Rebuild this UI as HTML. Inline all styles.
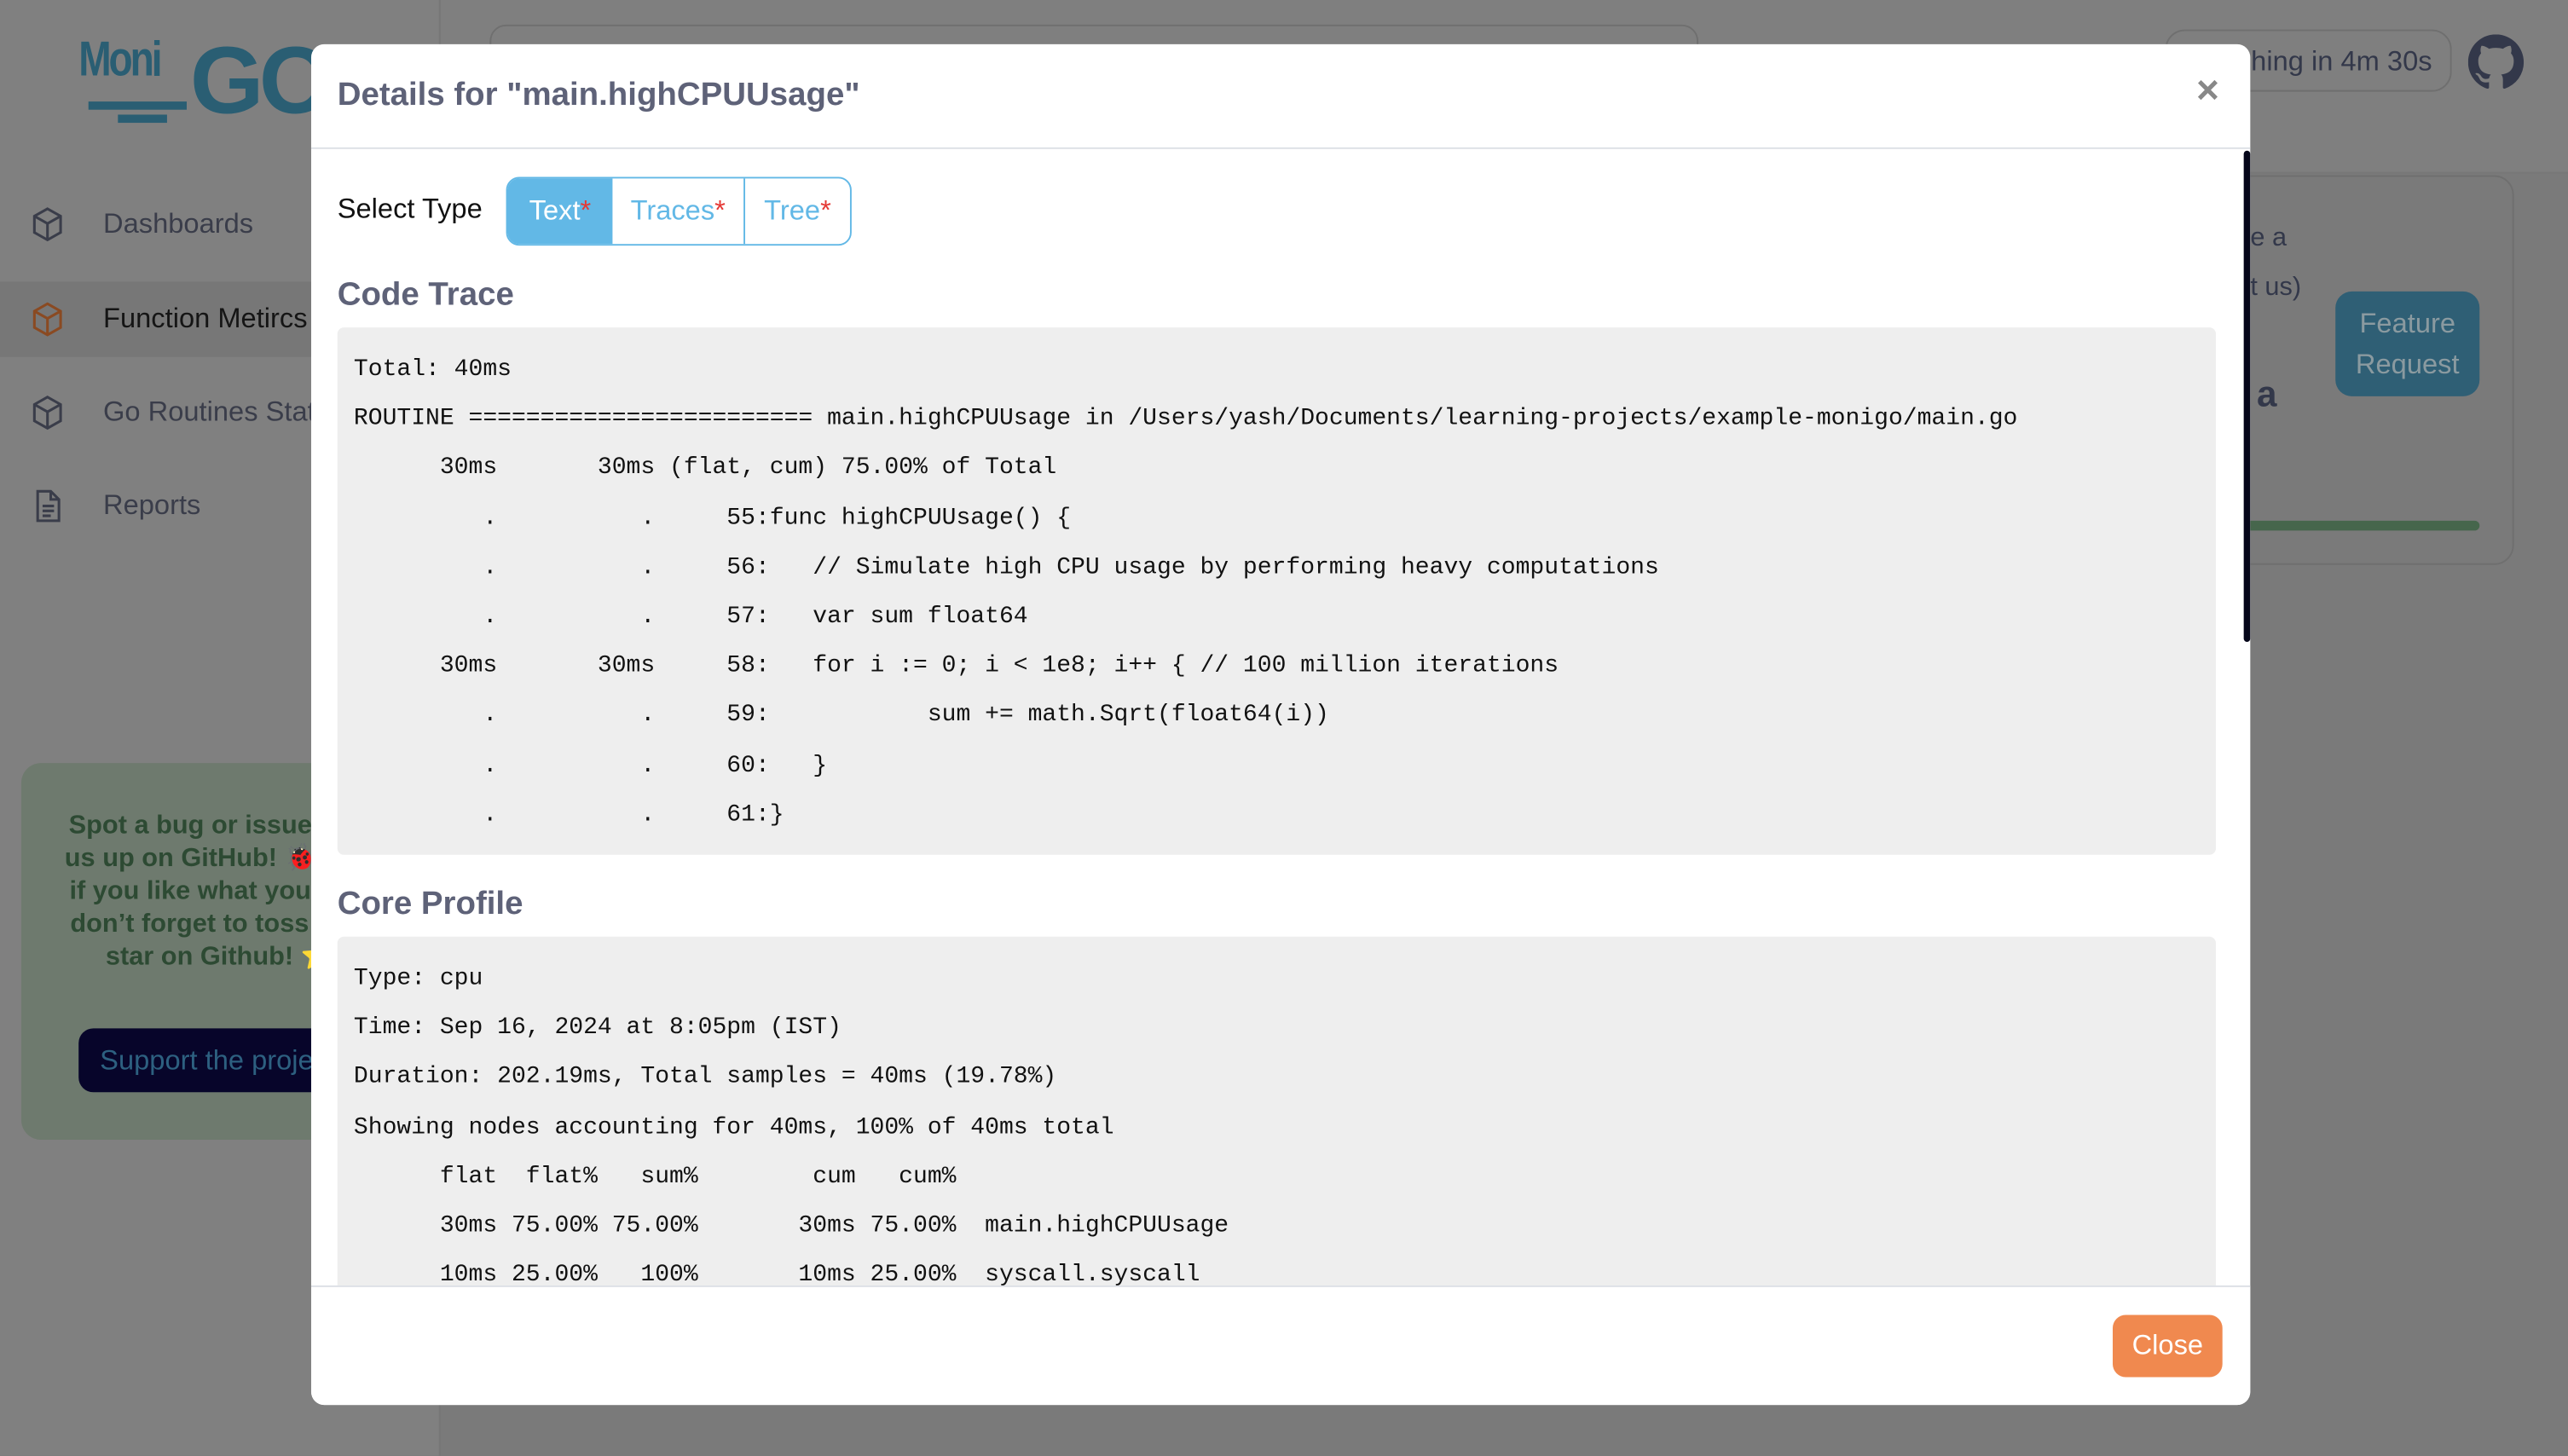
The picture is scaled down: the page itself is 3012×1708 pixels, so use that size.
<!DOCTYPE html>
<html><head><meta charset="utf-8">
<style>
html,body{margin:0;padding:0;width:3012px;height:1708px;overflow:hidden;background:#7a7a7a}
#w{position:absolute;left:0;top:0;width:1568px;height:889px;transform:scale(1.92092);transform-origin:0 0;font-family:"Liberation Sans",sans-serif;background:#7a7a7a;overflow:hidden}
.abs{position:absolute}
.side{left:0;top:0;width:268px;height:889px;background:#808080;border-right:1px solid #767676}
.nav{left:0;width:268px;height:46px;display:flex;align-items:center;font-size:17px;color:#3a3d4a}
.nav svg{position:absolute;left:19px}
.nav span{position:absolute;left:63px}
.modal{left:190px;top:27px;width:1184px;height:831px;background:#fff;border-radius:8px;overflow:hidden}
.mono{font-family:"Liberation Mono",monospace;font-size:14.6px;line-height:30.2px;white-space:pre;color:#111}
.h{font-size:20px;font-weight:bold;color:#5e6278}
</style></head><body><div id="w">

<div class="abs side">
  <div class="abs" style="left:48px;top:22px;color:#2a5e73;font-weight:bold">
    <div class="abs" style="left:0;top:-2px;font-size:30px;letter-spacing:-2px;transform:scaleX(0.8);transform-origin:0 0">Moni</div>
    <div class="abs" style="left:6px;top:40px;width:60px;height:5px;background:#2a5e73"></div>
    <div class="abs" style="left:24px;top:48px;width:30px;height:5px;background:#2a5e73"></div>
    <div class="abs" style="left:68px;top:-6px;font-size:58px;letter-spacing:-3px">GO</div>
  </div>
  <div class="abs nav" style="top:114px"><svg width="20" height="22" viewBox="0 0 20 22" fill="none" stroke="#3a3d4a" stroke-width="1.6"><path d="M10 1.5 18 6v10l-8 4.5L2 16V6z M2 6l8 4.5L18 6 M10 10.5V20.5"/></svg><span>Dashboards</span></div>
  <div class="abs nav" style="top:172px;background:#777"><svg width="20" height="22" viewBox="0 0 20 22" fill="none" stroke="#8a4a22" stroke-width="1.6"><path d="M10 1.5 18 6v10l-8 4.5L2 16V6z M2 6l8 4.5L18 6 M10 10.5V20.5"/></svg><span style="color:#151515">Function Metircs</span></div>
  <div class="abs nav" style="top:229px"><svg width="20" height="22" viewBox="0 0 20 22" fill="none" stroke="#3a3d4a" stroke-width="1.6"><path d="M10 1.5 18 6v10l-8 4.5L2 16V6z M2 6l8 4.5L18 6 M10 10.5V20.5"/></svg><span>Go Routines Stats</span></div>
  <div class="abs nav" style="top:286px"><svg width="20" height="22" viewBox="0 0 20 22" fill="none" stroke="#3a3d4a" stroke-width="1.6"><path d="M4 2h8l5 5v13H4z M12 2v5h5 M7 11h7 M7 14h7 M7 17h5"/></svg><span>Reports</span></div>
  <div class="abs" style="left:13px;top:466px;width:242px;height:230px;background:#6e7a6e;border-radius:12px">
    <div class="abs" style="left:0;top:29px;width:242px;text-align:center;font-weight:bold;font-size:16px;line-height:20px;color:#2d4a33">Spot a bug or issue? Hit<br>us up on GitHub! 🐞 And<br>if you like what you see,<br>don’t forget to toss us a<br>star on Github! ⭐</div>
    <div class="abs" style="left:35px;top:162px;width:180px;height:39px;background:#07052a;border-radius:9px;color:#2d6080;font-size:17px;line-height:39px;padding-left:13px;box-sizing:border-box;white-space:nowrap">Support the project</div>
  </div>
</div>

<div class="abs" style="left:269px;top:0;width:1299px;height:105px;background:#7f7f7f;border-bottom:1px solid #777"></div>
<div class="abs" style="left:299px;top:15px;width:736px;height:40px;border:1px solid #6f6f6f;border-radius:10px"></div>
<div class="abs" style="left:1322px;top:18px;width:175px;height:38px;border:1px solid #6f6f6f;border-radius:12px;box-sizing:border-box;font-size:17px;color:#33384a;line-height:38px;text-align:right;padding-right:11px">Refreshing in 4m 30s</div>
<svg class="abs" style="left:1507px;top:21px" width="34" height="34" viewBox="0 0 16 16"><path fill="#33384a" d="M8 0C3.58 0 0 3.58 0 8c0 3.54 2.29 6.530 5.470 7.590.4.07.55-.17.55-.38 0-.19-.01-.82-.01-1.49-2.01.37-2.53-.49-2.69-.94-.09-.23-.48-.94-.82-1.13-.28-.15-.68-.52-.01-.53.63-.01 1.080.58 1.230.82.72 1.21 1.870.87 2.330.66.07-.52.28-.87.51-1.07-1.78-.2-3.64-.89-3.64-3.95 0-.87.31-1.59.82-2.15-.08-.2-.36-1.020.08-2.12 0 0 .67-.21 2.200.82.64-.18 1.320-.27 2-.27.68 0 1.360.09 2 .27 1.53-1.04 2.2-.82 2.2-.82.44 1.1.16 1.920.08 2.12.51.56.82 1.27.82 2.15 0 3.07-1.87 3.75-3.65 3.95.29.25.54.73.54 1.48 0 1.07-.01 1.93-.01 2.2 0 .21.15.46.55.38A8.013 8.013 0 0016 8c0-4.42-3.58-8-8-8z"/></svg>
<div class="abs" style="left:1290px;top:107px;width:245px;height:238px;border:1px solid #6f6f6f;border-radius:12px;box-sizing:border-box"></div>
<div class="abs" style="left:1374px;top:131px;font-size:16px;color:#33384a;line-height:30px">e a<br>t us)</div>
<div class="abs" style="left:1378px;top:228px;font-size:22px;font-weight:bold;color:#33384a">a</div>
<div class="abs" style="left:1426px;top:178px;width:88px;height:64px;background:#2f5f75;border-radius:10px;color:#8a9aa0;font-size:17px;text-align:center;line-height:25px;padding-top:7px;box-sizing:border-box">Feature<br>Request</div>
<div class="abs" style="left:1340px;top:318px;width:174px;height:6px;background:#46664c;border-radius:3px"></div>

<div class="abs modal">
  <div class="abs h" style="left:16px;top:20px;font-size:20px">Details for "main.highCPUUsage"</div>
  <div class="abs" style="left:1151px;top:15px;font-size:24px;color:#888;font-weight:bold">×</div>
  <div class="abs" style="left:0;top:63px;width:1184px;height:1px;background:#dde0e6"></div>
  <div class="abs" style="left:1180px;top:65px;width:4px;height:300px;background:#05061a;border-radius:2px"></div>
  <div class="abs" style="left:16px;top:91px;font-size:17px;color:#111">Select Type</div>
  <div class="abs" style="left:119px;top:81px;width:211px;height:42px;border:1px solid #62b8e6;border-radius:8px;box-sizing:border-box;overflow:hidden;display:flex;font-size:17px;line-height:40px;color:#62b8e6">
    <div style="width:64px;background:#62b8e6;color:#fff;text-align:center">Text<span style="color:#e53935">*</span></div>
    <div style="width:80px;text-align:center;border-right:1px solid #62b8e6">Traces<span style="color:#e53935">*</span></div>
    <div style="flex:1;text-align:center">Tree<span style="color:#e53935">*</span></div>
  </div>
  <div class="abs h" style="left:16px;top:142px">Code Trace</div>
  <div class="abs mono" style="left:16px;top:173px;width:1147px;height:322px;background:#eeeeee;border-radius:4px;box-sizing:border-box;padding:11px 10px">Total: 40ms
ROUTINE ======================== main.highCPUUsage in /Users/yash/Documents/learning-projects/example-monigo/main.go
      30ms       30ms (flat, cum) 75.00% of Total
         .          .     55:func highCPUUsage() {
         .          .     56:   // Simulate high CPU usage by performing heavy computations
         .          .     57:   var sum float64
      30ms       30ms     58:   for i := 0; i &lt; 1e8; i++ { // 100 million iterations
         .          .     59:           sum += math.Sqrt(float64(i))
         .          .     60:   }
         .          .     61:}</div>
  <div class="abs h" style="left:16px;top:514px">Core Profile</div>
  <div class="abs mono" style="left:16px;top:545px;width:1147px;height:240px;background:#eeeeee;border-radius:4px;box-sizing:border-box;padding:11px 10px;overflow:hidden">Type: cpu
Time: Sep 16, 2024 at 8:05pm (IST)
Duration: 202.19ms, Total samples = 40ms (19.78%)
Showing nodes accounting for 40ms, 100% of 40ms total
      flat  flat%   sum%        cum   cum%
      30ms 75.00% 75.00%       30ms 75.00%  main.highCPUUsage
      10ms 25.00%   100%       10ms 25.00%  syscall.syscall</div>
  <div class="abs" style="left:0;top:758px;width:1184px;height:73px;background:#fff;border-top:1px solid #dde0e6"></div>
  <div class="abs" style="left:1100px;top:776px;width:67px;height:38px;background:#f0894f;border-radius:8px;color:#fff;font-size:17px;line-height:38px;text-align:center">Close</div>
</div>

</div></body></html>
